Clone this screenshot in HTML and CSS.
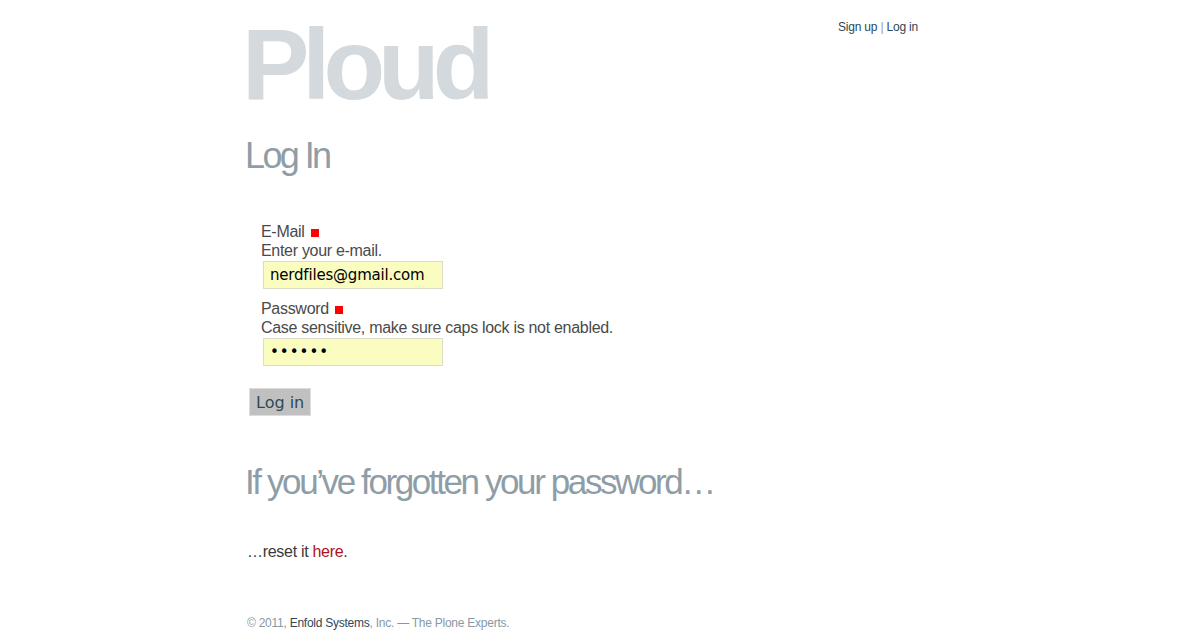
FILE: index.html
```html
<!DOCTYPE html>
<html>
<head>
<meta charset="utf-8">
<link rel="stylesheet" href="styles.css">
</head>
<body>
<div class="page">
  <header class="top">
    <div class="logo">Ploud</div>
    <nav class="nav"><a href="#">Sign up</a> <span class="sep">|</span> <a href="#">Log in</a></nav>
  </header>
  <h1 class="title">Log In</h1>
  <form class="form">
    <div class="field">
      <div class="label">E-Mail <span class="req"></span></div>
      <div class="help">Enter your e-mail.</div>
      <input class="input" type="text" value="nerdfiles@gmail.com">
    </div>
    <div class="field">
      <div class="label">Password <span class="req"></span></div>
      <div class="help">Case sensitive, make sure caps lock is not enabled.</div>
      <input class="input pw" type="password" value="secret">
    </div>
    <button class="btn" type="button">Log in</button>
  </form>
  <h2 class="forgot">If you’ve forgotten your password…</h2>
  <p class="reset">…reset it <a href="#" class="red">here</a>.</p>
  <footer class="footer">© 2011, <a href="#">Enfold Systems</a>, Inc. — The Plone Experts.</footer>
</div>
</body>
</html>
```
FILE: styles.css
```css
html, body { margin: 0; padding: 0; background: #fff; }
body { font-family: "Liberation Sans", Arial, sans-serif; color: #4a4a4a; }
.page { width: 673px; margin-left: 245px; }
.top { display: flex; justify-content: space-between; align-items: flex-start; height: 120px; }
.logo {
  font-size: 101px; font-weight: bold; color: #d3d9dc; letter-spacing: -7px;
  line-height: 1; margin-top: 14px; margin-left: -3px;
}
.nav { font-size: 12px; margin-top: 20px; color: #889; letter-spacing: -0.2px; }
.nav a { color: #2d4757; text-decoration: none; }
.sep { color: #99a; }
.title {
  font-size: 36px; font-weight: normal; color: #8e9da6; letter-spacing: -2.6px;
  margin: 16px 0 0 0; line-height: 40px;
}
.form { margin-top: 46px; padding-left: 16px; }
.field { margin-bottom: 10px; }
.label { font-size: 16px; color: #4a4a4a; line-height: 19px; letter-spacing: -0.3px; }
.req { display: inline-block; width: 8px; height: 8px; background: #f00; margin-left: 2px; vertical-align: 0; }
.help { font-size: 16px; color: #4a4a4a; line-height: 19px; letter-spacing: -0.3px; }
.input {
  display: block; box-sizing: border-box; width: 180px; height: 28px; margin: 1px 0 0 2px;
  background: #fafcc0; border: 1px solid #dcdcc8; font-family: "DejaVu Sans", sans-serif;
  font-size: 15px; letter-spacing: -0.2px; color: #000; padding: 0 6px; outline: none;
}
.pw { letter-spacing: 1px; }
.btn {
  margin: 12px 0 0 -12px; height: 28px; padding: 0 6px; background: #c0c0c0; border: 1px solid #ddd;
  font-family: "DejaVu Sans", sans-serif; font-size: 16px; color: #2c4a58;
}
.forgot {
  font-size: 35px; font-weight: normal; color: #8e9da6; letter-spacing: -2.4px;
  margin: 46px 0 0 0; line-height: 40px;
}
.reset { font-size: 16px; margin: 41px 0 0 2px; color: #3a3a3a; letter-spacing: -0.3px; }
.red { color: #b01020; text-decoration: none; }
.footer { font-size: 12px; color: #8899a3; margin-top: 55px; margin-left: 2px; letter-spacing: -0.25px; }
.footer a { color: #2d4757; text-decoration: none; }
```
